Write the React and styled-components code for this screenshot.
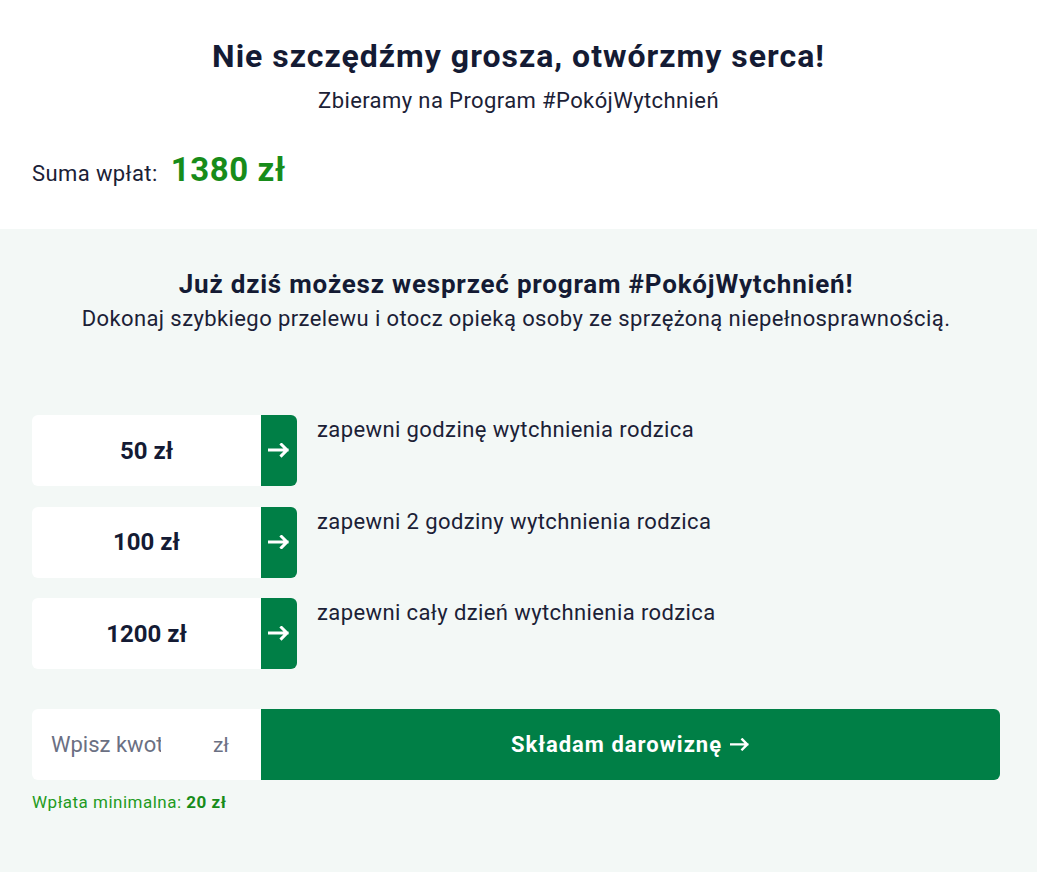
import styled, { createGlobalStyle } from "styled-components"

const GlobalStyle = createGlobalStyle`
  html, body {
    margin: 0;
    padding: 0;
    background: #ffffff;
  }
  body {
    font-family: Roboto, "Liberation Sans", Arial, sans-serif;
    color: #1b2136;
  }
`

const Page = styled.div`
  width: 1037px;
  min-height: 872px;
  display: flex;
  flex-direction: column;
`

const Header = styled.section`
  background: #ffffff;
  padding: 36px 37px 0 32px;
  height: 229px;
  box-sizing: border-box;
`

const Title = styled.h1`
  margin: 0;
  text-align: center;
  font-size: 32px;
  line-height: 40px;
  letter-spacing: 1px;
  font-weight: 700;
  color: #141b34;
  padding-left: 5px;
`

const Subtitle = styled.p`
  margin: 12px 0 0;
  text-align: center;
  font-size: 22px;
  line-height: 26px;
  letter-spacing: 0.4px;
  padding-left: 5px;
`

const Sum = styled.div`
  margin-top: 36px;
  display: flex;
  align-items: baseline;
  gap: 13px;
  font-size: 22px;
  line-height: 40px;
  letter-spacing: 0.4px;
`

const SumValue = styled.span`
  font-size: 33px;
  font-weight: 700;
  letter-spacing: 0.6px;
  color: #178c1a;
`

const Donate = styled.section`
  flex: 1;
  background: #f3f8f6;
  padding: 39px 37px 40px 32px;
`

const Lead = styled.h2`
  margin: 0;
  text-align: center;
  font-size: 26px;
  line-height: 32px;
  letter-spacing: 0.8px;
  font-weight: 700;
  color: #141b34;
`

const LeadText = styled.p`
  margin: 6px 0 0;
  text-align: center;
  font-size: 22px;
  line-height: 26px;
  letter-spacing: 0.4px;
`

const Options = styled.div`
  margin-top: 83px;
  display: flex;
  flex-direction: column;
  gap: 20.5px;
`

const Row = styled.div`
  display: flex;
  align-items: flex-start;
  gap: 20px;
`

const Choice = styled.div`
  display: flex;
  height: 71px;
`

const Amount = styled.div`
  width: 229px;
  background: #ffffff;
  border-radius: 6px 0 0 6px;
  display: flex;
  align-items: center;
  justify-content: center;
  font-size: 24px;
  font-weight: 700;
  color: #141b34;
`

const ArrowBox = styled.div`
  width: 36px;
  background: #007f46;
  border-radius: 0 6px 6px 0;
  display: flex;
  align-items: center;
  justify-content: center;
`

const Desc = styled.div`
  font-size: 22px;
  line-height: 30px;
  letter-spacing: 0.4px;
`

const Custom = styled.div`
  margin-top: 40px;
  display: flex;
  height: 71px;
`

const Field = styled.label`
  width: 229px;
  box-sizing: border-box;
  background: #ffffff;
  border-radius: 6px 0 0 6px;
  display: flex;
  align-items: center;
  padding: 0 32px 0 19px;
  font-size: 21px;
  color: #6b7083;
`

const Input = styled.input`
  width: 110px;
  border: none;
  outline: none;
  background: transparent;
  font: inherit;
  font-size: 22px;
  color: #1b2136;
  padding: 0;
  &::placeholder {
    color: #6b7083;
  }
`

const Unit = styled.span`
  margin-left: auto;
`

const Submit = styled.button`
  flex: 1;
  border: none;
  background: #007f46;
  border-radius: 0 6px 6px 0;
  color: #ffffff;
  font-family: inherit;
  font-size: 22px;
  letter-spacing: 1px;
  font-weight: 700;
  cursor: pointer;
  display: flex;
  align-items: center;
  justify-content: center;
  gap: 8px;
  padding: 0;
`

const Note = styled.div`
  margin-top: 12px;
  font-size: 17px;
  line-height: 20px;
  letter-spacing: 0.5px;
  color: #1f9b22;
  b {
    font-weight: 700;
    color: #178c1a;
  }
`

const Arrow = ({ size = 22, stroke = 3 }) => (
  <svg width={size} height={size * 0.64} viewBox="0 0 22 14" fill="none">
    <path
      d="M1 7h18M13.5 1.5l5.5 5.5-5.5 5.5"
      stroke="#ffffff"
      strokeWidth={stroke}
      strokeLinecap="square"
    />
  </svg>
)

const options = [
  { value: "50 zł", text: "zapewni godzinę wytchnienia rodzica" },
  { value: "100 zł", text: "zapewni 2 godziny wytchnienia rodzica" },
  { value: "1200 zł", text: "zapewni cały dzień wytchnienia rodzica" },
]

function App() {
  return (
    <Page>
      <GlobalStyle />
      <Header>
        <Title>Nie szczędźmy grosza, otwórzmy serca!</Title>
        <Subtitle>Zbieramy na Program #PokójWytchnień</Subtitle>
        <Sum>
          Suma wpłat: <SumValue>1380 zł</SumValue>
        </Sum>
      </Header>
      <Donate>
        <Lead>Już dziś możesz wesprzeć program #PokójWytchnień!</Lead>
        <LeadText>
          Dokonaj szybkiego przelewu i otocz opieką osoby ze sprzężoną niepełnosprawnością.
        </LeadText>
        <Options>
          {options.map(o => (
            <Row key={o.value}>
              <Choice>
                <Amount>{o.value}</Amount>
                <ArrowBox>
                  <Arrow size={22} />
                </ArrowBox>
              </Choice>
              <Desc>{o.text}</Desc>
            </Row>
          ))}
        </Options>
        <Custom>
          <Field>
            <Input placeholder="Wpisz kwotę" />
            <Unit>zł</Unit>
          </Field>
          <Submit>
            Składam darowiznę <Arrow size={20} stroke={2.6} />
          </Submit>
        </Custom>
        <Note>
          Wpłata minimalna: <b>20 zł</b>
        </Note>
      </Donate>
    </Page>
  )
}

export default App
